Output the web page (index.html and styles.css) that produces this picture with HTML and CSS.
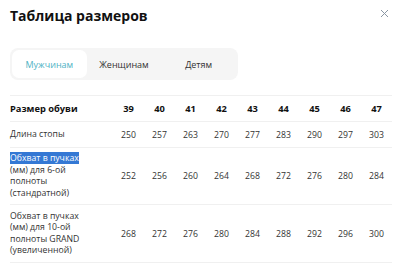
FILE: index.html
```html
<!DOCTYPE html>
<html lang="ru">
<head>
<meta charset="utf-8">
<link rel="stylesheet" href="styles.css">
</head>
<body>
<div class="modal">
  <div class="head">
    <h1 class="title">Таблица размеров</h1>
    <button class="close" aria-label="Закрыть">
      <svg width="9" height="9" viewBox="0 0 9 9"><path d="M1 1L8 8M8 1L1 8" stroke="#8a96a3" stroke-width="1" fill="none"/></svg>
    </button>
  </div>
  <div class="tabs">
    <div class="tab active">Мужчинам</div>
    <div class="tab">Женщинам</div>
    <div class="tab">Детям</div>
  </div>
  <table class="sizes">
    <tr class="hdr">
      <th class="label">Размер обуви</th>
      <th>39</th><th>40</th><th>41</th><th>42</th><th>43</th><th>44</th><th>45</th><th>46</th><th>47</th>
    </tr>
    <tr class="r1">
      <td class="label">Длина стопы</td>
      <td>250</td><td>257</td><td>263</td><td>270</td><td>277</td><td>283</td><td>290</td><td>297</td><td>303</td>
    </tr>
    <tr class="r2">
      <td class="label"><span class="sel">Обхват в пучках</span> (мм) для 6-ой полноты (стандратной)</td>
      <td>252</td><td>256</td><td>260</td><td>264</td><td>268</td><td>272</td><td>276</td><td>280</td><td>284</td>
    </tr>
    <tr class="r3">
      <td class="label">Обхват в пучках (мм) для 10-ой полноты GRAND (увеличенной)</td>
      <td>268</td><td>272</td><td>276</td><td>280</td><td>284</td><td>288</td><td>292</td><td>296</td><td>300</td>
    </tr>
  </table>
</div>
</body>
</html>
```
FILE: styles.css
```css
html, body {
  margin: 0;
  padding: 0;
  background: #fff;
}
body {
  font-family: "Open Sans", "Noto Sans", sans-serif;
  color: #333;
}
.modal {
  padding: 0 8px 0 10px;
}
.head {
  display: flex;
  justify-content: space-between;
  align-items: flex-start;
  height: 48px;
}
.title {
  margin: 4px 0 0 0;
  font-size: 14px;
  font-weight: 700;
  color: #111;
  line-height: 24px;
}
.close {
  border: 0;
  background: none;
  padding: 0;
  margin: 9px 3px 0 0;
  width: 9px;
  height: 9px;
  display: flex;
}
.tabs {
  display: flex;
  width: 224px;
  padding: 2px;
  background: #f5f5f5;
  border-radius: 8px;
}
.tab {
  flex: 1;
  height: 28px;
  display: flex;
  align-items: center;
  justify-content: center;
  font-size: 9px;
  color: #333;
  border-radius: 7px;
}
.tab.active {
  background: #fff;
  color: #4fb3c4;
}
.sizes {
  margin-top: 15px;
  border-collapse: collapse;
  width: 382px;
  table-layout: fixed;
}
.sizes th, .sizes td {
  border-top: 1px solid #f0f0f0;
  border-bottom: 1px solid #f0f0f0;
  padding: 0;
  text-align: center;
  width: 31px;
  font-size: 8.7px;
  color: #333;
  font-weight: 400;
}
.sizes .label {
  width: 103px;
  text-align: left;
  padding-right: 26px;
  box-sizing: border-box;
  line-height: 11.5px;
}
.hdr th {
  height: 25px;
  font-weight: 700;
  font-size: 9.3px;
  color: #111;
}
.r1 td { height: 25px; }
.r2 td { height: 56px; }
.r3 td { height: 57px; }
.sel {
  background: #3478d4;
  color: #fff;
}
```
